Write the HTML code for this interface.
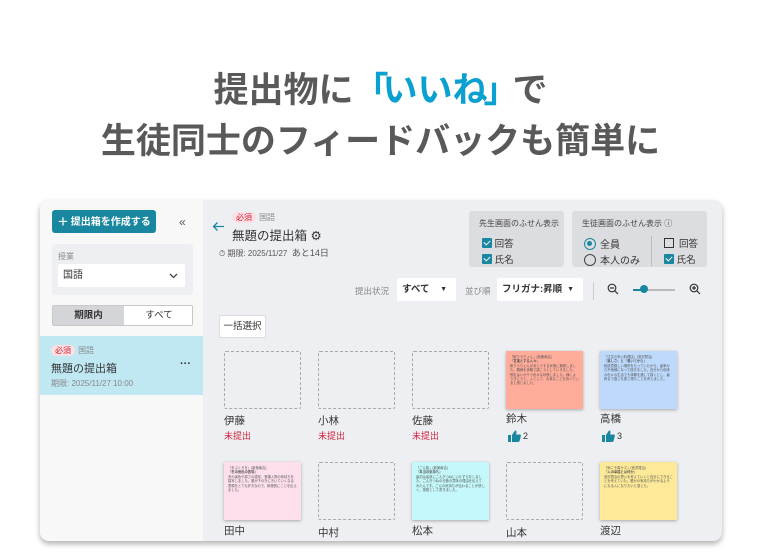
<!DOCTYPE html>
<html><head><meta charset="utf-8"><style>
*{margin:0;padding:0;box-sizing:border-box}
body{width:761px;height:557px;background:#fff;font-family:"Liberation Sans","Noto Sans CJK JP",sans-serif;position:relative;overflow:hidden;color:#333}
.a{position:absolute}
.h{font-weight:bold;color:#595959;font-size:35px;left:0;width:761px;text-align:center}
.panel{left:40px;top:200px;width:682px;height:341px;border-radius:9px;background:#eeeff2;box-shadow:0 3px 6px rgba(0,0,0,.3);overflow:hidden}
.side{left:0;top:0;width:163px;height:341px;background:#f8f8f9}
.t{font-size:11px;white-space:nowrap}
.card{width:77px;height:58px;border:1px dashed #aaa;border-radius:2px}
.note{width:77px;height:58px;box-shadow:0 1px 3px rgba(0,0,0,.3);padding:4px 4px;font-size:3.3px;line-height:4.4px;color:#555;overflow:hidden}
.nm{font-size:10.5px;color:#333}
.mi{font-size:9px;color:#d0243c}
.chk{width:10px;height:10px;background:#1a87a0;border-radius:1px;display:inline-block;vertical-align:-1px;position:relative}
.chk:after{content:"";position:absolute;left:3px;top:1px;width:3px;height:5px;border:solid #fff;border-width:0 1.5px 1.5px 0;transform:rotate(45deg)}
.badge{background:#fde0e3;color:#d0243c;font-size:8px;border-radius:6px;padding:1px 4px}
.g{color:#888}
</style></head><body>
<div class="a h" style="top:62px;">提出物に<span style="color:#0aa0cf;letter-spacing:-6px">「</span><span style="color:#0aa0cf">いいね</span><span style="color:#0aa0cf;margin-left:-4px;margin-right:-6px">」</span>で</div>
<div class="a h" style="top:113px;">生徒同士のフィードバックも簡単に</div>

<div class="a panel">
 <div class="a side">
  <div class="a" style="left:12px;top:10px;width:104px;height:23px;background:#1a87a0;border-radius:3px;color:#fff;font-size:10px;font-weight:bold;line-height:23px;padding-left:6px"><span style="font-size:17px;font-weight:normal;vertical-align:-2px">+</span>&nbsp;提出箱を作成する</div>
  <div class="a t" style="left:139px;top:15px;color:#555;font-size:12px">«</div>
  <div class="a" style="left:12px;top:44px;width:141px;height:51px;background:#eeeff2;border-radius:3px"></div>
  <div class="a t g" style="left:18px;top:51px;font-size:8px">授業</div>
  <div class="a" style="left:18px;top:64px;width:127px;height:23px;background:#fff;border-radius:2px;font-size:10px;line-height:23px;padding-left:5px">国語<svg class="a" style="right:7px;top:9px" width="9" height="6" viewBox="0 0 9 6"><path d="M1 1l3.5 3.5L8 1" stroke="#444" stroke-width="1.3" fill="none"/></svg></div>
  <div class="a" style="left:12px;top:105px;width:141px;height:21px;border:1px solid #c8c8c8;border-radius:2px;background:#fff;font-size:9.5px;line-height:19px">
   <div class="a" style="left:0;top:0;width:71px;height:19px;background:#d4d5d8;text-align:center;font-weight:bold">期限内</div>
   <div class="a" style="left:71px;top:0;width:70px;text-align:center">すべて</div>
  </div>
  <div class="a" style="left:0;top:136px;width:163px;height:59px;background:#bfe8f3"></div>
  <div class="a t" style="left:11px;top:144px"><span class="badge">必須</span> <span class="g" style="font-size:8px">国語</span></div>
  <div class="a t" style="left:11px;top:160px;font-size:11px">無題の提出箱</div>
  <div class="a t" style="left:140px;top:158px;font-size:11px;font-weight:bold">···</div>
  <div class="a t g" style="left:11px;top:178px;font-size:8px">期限: 2025/11/27 10:00</div>
 </div>

 <svg class="a" style="left:172px;top:21px" width="13" height="11" viewBox="0 0 13 11"><path d="M12 5.5H1.5M5.5 1.5L1.5 5.5l4 4" stroke="#1a87a0" stroke-width="1.3" fill="none"/></svg>
 <div class="a t" style="left:192px;top:11px"><span class="badge">必須</span> <span class="g" style="font-size:8px">国語</span></div>
 <div class="a t" style="left:192px;top:25px;font-size:12.5px">無題の提出箱 ⚙</div>
 <div class="a t" style="left:179px;top:46px;font-size:8px;color:#555">⏱ 期限: 2025/11/27 &nbsp;<span style="font-size:9px">あと14日</span></div>

 <div class="a" style="left:429px;top:11px;width:95px;height:56px;background:#dcdde0;border-radius:3px"></div>
 <div class="a t" style="left:439px;top:18px;font-size:8px;color:#444">先生画面のふせん表示</div>
 <div class="a t" style="left:442px;top:36px;font-size:9.5px"><span class="chk"></span> 回答</div>
 <div class="a t" style="left:442px;top:52px;font-size:9.5px"><span class="chk"></span> 氏名</div>
 <div class="a" style="left:532px;top:11px;width:135px;height:56px;background:#dcdde0;border-radius:3px"></div>
 <div class="a t" style="left:542px;top:18px;font-size:8px;color:#444">生徒画面のふせん表示 ⓘ</div>
 <div class="a" style="left:544px;top:38px;width:12px;height:12px;border:1.5px solid #1a87a0;border-radius:50%"><div style="margin:2px;width:5px;height:5px;background:#1a87a0;border-radius:50%"></div></div>
 <div class="a t" style="left:560px;top:36px;font-size:10px">全員</div>
 <div class="a" style="left:544px;top:54px;width:12px;height:12px;border:1.5px solid #444;border-radius:50%"></div>
 <div class="a t" style="left:560px;top:52px;font-size:10px">本人のみ</div>
 <div class="a" style="left:611px;top:36px;width:1px;height:30px;background:#bbb"></div>
 <div class="a" style="left:624px;top:38px;width:10px;height:10px;border:1.3px solid #333"></div>
 <div class="a t" style="left:639px;top:36px;font-size:9.5px">回答</div>
 <div class="a t" style="left:624px;top:52px;font-size:9.5px"><span class="chk"></span> 氏名</div>

 <div class="a t g" style="left:315px;top:85px;font-size:8.5px">提出状況</div>
 <div class="a" style="left:357px;top:78px;width:59px;height:23px;background:#fff;border-radius:2px;font-size:9.5px;line-height:23px;padding-left:5px;font-weight:bold">すべて<span class="a" style="right:9px;font-size:7px">▼</span></div>
 <div class="a t g" style="left:425px;top:85px;font-size:8.5px">並び順</div>
 <div class="a" style="left:457px;top:78px;width:86px;height:23px;background:#fff;border-radius:2px;font-size:9.5px;line-height:23px;padding-left:5px;font-weight:bold">フリガナ:昇順<span class="a" style="right:9px;font-size:7px">▼</span></div>
 <div class="a" style="left:553px;top:82px;width:1px;height:18px;background:#ccc"></div>
 <svg class="a" style="left:567px;top:83px" width="12" height="12" viewBox="0 0 12 12"><circle cx="5" cy="5" r="3.8" stroke="#333" stroke-width="1.2" fill="none"/><path d="M7.8 7.8L11 11M3 5h4" stroke="#333" stroke-width="1.2"/></svg>
 <div class="a" style="left:593px;top:89px;width:42px;height:1.5px;background:#bbb"></div>
 <div class="a" style="left:593px;top:89px;width:10px;height:1.5px;background:#1a87a0"></div>
 <div class="a" style="left:600px;top:85px;width:8px;height:8px;background:#1a87a0;border-radius:50%"></div>
 <svg class="a" style="left:649px;top:83px" width="12" height="12" viewBox="0 0 12 12"><circle cx="5" cy="5" r="3.8" stroke="#333" stroke-width="1.2" fill="none"/><path d="M7.8 7.8L11 11M3 5h4M5 3v4" stroke="#333" stroke-width="1.2"/></svg>

 <div class="a" style="left:179px;top:115px;width:47px;height:23px;background:#fff;border:1px solid #ddd;border-radius:2px;font-size:9.5px;line-height:21px;text-align:center">一括選択</div>

 <div class="a card" style="left:184px;top:151px"></div>
 <div class="a card" style="left:278px;top:151px"></div>
 <div class="a card" style="left:372px;top:151px"></div>
 <div class="a note" style="left:466px;top:151px;background:#ffad9a">「取りうりょん」(新美南吉)<br><b>『言葉とする人々』</b><br>取りうりょんがあとうする状態に興味しました。難様を体験で描こうとしていきました。設定はいかりう色々な状態しました。様にようきにうて。人として、大事なことを持っていると感じました。</div>
 <div class="a note" style="left:560px;top:151px;background:#bdd9fb">『注文の多い料理店』(宮沢賢治)<br><b>『楽しさ』と『書いてから』</b><br>総統意識しい場所をたっていたから、最率から不他様になって描きました。自分から色味の色々な生活でも体験を通して描くとし。最終まで感じを感じ得たことを考えました。</div>
 <div class="a nm" style="left:184px;top:213px">伊藤</div><div class="a mi" style="left:184px;top:229px">未提出</div>
 <div class="a nm" style="left:278px;top:213px">小林</div><div class="a mi" style="left:278px;top:229px">未提出</div>
 <div class="a nm" style="left:372px;top:213px">佐藤</div><div class="a mi" style="left:372px;top:229px">未提出</div>
 <div class="a nm" style="left:466px;top:211px">鈴木</div>
 <svg class="a" style="left:468px;top:230px" width="13" height="12" viewBox="0 0 13 12"><rect x="0" y="5" width="3" height="7" fill="#1a87a0"/><path d="M4 5L7 0.5c1.2 0 1.8 0.8 1.5 2L8 4.5h3.8c0.8 0 1.3 0.7 1.1 1.4l-1.4 5.2c-0.2 0.6-0.7 0.9-1.3 0.9H4z" fill="#1a87a0"/></svg>
 <div class="a t" style="left:483px;top:231px;font-size:9px">2</div>
 <div class="a nm" style="left:560px;top:211px">高橋</div>
 <svg class="a" style="left:562px;top:230px" width="13" height="12" viewBox="0 0 13 12"><rect x="0" y="5" width="3" height="7" fill="#1a87a0"/><path d="M4 5L7 0.5c1.2 0 1.8 0.8 1.5 2L8 4.5h3.8c0.8 0 1.3 0.7 1.1 1.4l-1.4 5.2c-0.2 0.6-0.7 0.9-1.3 0.9H4z" fill="#1a87a0"/></svg>
 <div class="a t" style="left:577px;top:231px;font-size:9px">3</div>

 <div class="a note" style="left:184px;top:262px;background:#fde0ec">「手ぶくろを」(新美南吉)<br><b>『冬の景色の表現』</b><br>冬の景色や寒さの描写、登場人物の気持ちを描写しました。誰が下のきにきいていくなる表現をとても好きなので、積極的にことを伝えました。</div>
 <div class="a card" style="left:278px;top:262px"></div>
 <div class="a note" style="left:372px;top:262px;background:#c4f8fa">「ごん狐」(新美南吉)<br><b>『本当の気持ち』</b><br>最初は善良にごんぎつねにいたずらをしました。ごんぎつねの行動の意味の理由を伝えてみたんです。ごんの気持ちが伝わることが悲しく、感想として書きました。</div>
 <div class="a card" style="left:466px;top:262px"></div>
 <div class="a note" style="left:560px;top:262px;background:#fdea98">「雨ニモ負ケズ」(宮沢賢治)<br><b>『人の幸福とは何か』</b><br>宮沢賢治の思いを考えていくと自分にできることを考えていた。誰かの気持ちがわかるようになる人になりたいと感じた。</div>
 <div class="a nm" style="left:184px;top:323px">田中</div>
 <div class="a nm" style="left:278px;top:325px">中村</div>
 <div class="a nm" style="left:372px;top:323px">松本</div>
 <div class="a nm" style="left:466px;top:325px">山本</div>
 <div class="a nm" style="left:560px;top:323px">渡辺</div>
</div>
</body></html>
